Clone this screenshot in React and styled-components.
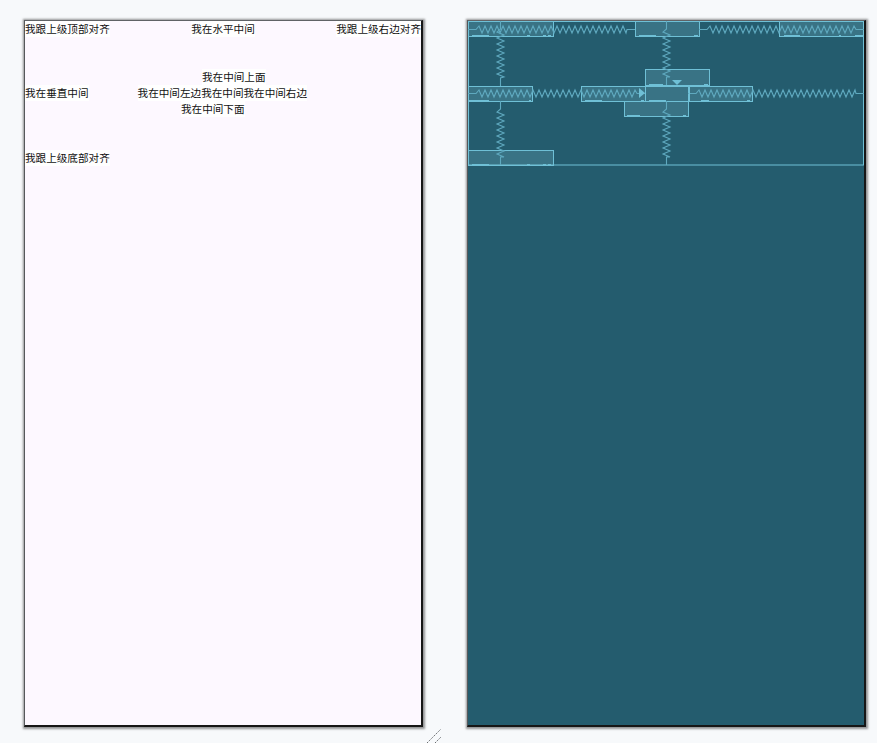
import React from "react"
import styled, { createGlobalStyle } from "styled-components"

const GlobalStyle = createGlobalStyle`
  html, body {
    margin: 0;
    padding: 0;
    background: #f7f9fb;
  }
  #root {
    width: 877px;
    height: 743px;
    overflow: hidden;
  }
`

const Page = styled.div`
  position: relative;
  width: 877px;
  height: 743px;
  display: flex;
  gap: 44px;
  padding: 20px 0 0 24px;
  box-sizing: border-box;
`

const Frame = styled.div`
  width: 399px;
  height: 707px;
  flex: none;
  background: ${props => props.$bg};
  border-top: 1px solid #606366;
  border-left: 1px solid #55585a;
  border-right: 2px solid #161616;
  border-bottom: 2px solid #161616;
  box-shadow: 0 0 2px 1.5px rgba(80, 80, 80, 0.6);
  box-sizing: border-box;
  overflow: hidden;
`

const Row = styled.div`
  display: flex;
  justify-content: ${props => props.$justify || "flex-start"};
  height: 16px;
  margin-top: ${props => props.$top || 0}px;
  padding-left: ${props => props.$indent || 0}px;
`

const Label = styled.span`
  font-family: "Noto Sans CJK SC", "Liberation Sans", sans-serif;
  font-size: 10.6px;
  line-height: 16px;
  color: #111;
  white-space: nowrap;
  background: #fff;
`

const Blueprint = styled.svg`
  display: block;
`

const Grip = styled.svg`
  position: absolute;
  left: 427px;
  top: 729px;
`

const line = "#6fc0d6"

const boxes = [
  { x: 468, y: 21, w: 85, h: 15, marks: [[472, 489], [527, 530], [543, 546], [548, 551]] },
  { x: 635, y: 21, w: 64, h: 15, marks: [[639, 656], [694, 698]] },
  { x: 779, y: 21, w: 85, h: 15, marks: [[784, 800], [839, 841], [855, 863]] },
  { x: 645, y: 69, w: 64, h: 16, marks: [[649, 663], [704, 708]] },
  { x: 468, y: 86, w: 64, h: 15, marks: [[469, 489], [529, 531]] },
  { x: 581, y: 86, w: 64, h: 15, marks: [[585, 602], [641, 644]] },
  { x: 645, y: 86, w: 43, h: 15, marks: [[649, 666]] },
  { x: 688, y: 86, w: 64, h: 15, marks: [[701, 709], [747, 750]] },
  { x: 624, y: 101, w: 64, h: 15, marks: [[627, 640], [683, 686]] },
  { x: 468, y: 150, w: 85, h: 15, marks: [[472, 489], [527, 530], [543, 546], [548, 551]] },
]

// zigzag between two points, straight leads at each end
const spring = (x1, y1, x2, y2, lead = 8, pitch = 6) => {
  const horizontal = y1 === y2
  const len = horizontal ? x2 - x1 : y2 - y1
  const count = Math.floor((len - lead * 2) / (pitch / 2))
  const at = (along, side) =>
    horizontal ? `${x1 + along} ${y1 + side}` : `${x1 + side} ${y1 + along}`
  let d = `M${at(0, 0)} L${at(lead, 0)}`
  for (let i = 1; i <= count; i++) {
    d += ` L${at(lead + (i * pitch) / 2, i % 2 ? -3.5 : 3.5)}`
  }
  d += ` L${at(len - lead, 0)} L${at(len, 0)}`
  return d
}

const springs = [
  [468, 29.5, 635, 29.5],
  [699, 29.5, 864, 29.5],
  [468, 93.5, 645, 93.5],
  [688, 93.5, 864, 93.5],
  [500.5, 21, 500.5, 86],
  [500.5, 101, 500.5, 165],
  [666.5, 21, 666.5, 85],
  [666.5, 101, 666.5, 165],
]

const Plan = () => (
  <Blueprint width="396" height="704" viewBox="468 21 396 704">
    <rect x="468.5" y="21.5" width="395" height="143.5" fill="none" stroke={line} />
    {boxes.map(b => (
      <g key={`${b.x}-${b.y}`}>
        <rect x={b.x + 0.5} y={b.y + 0.5} width={b.w} height={b.h} fill="#93dcec" fillOpacity="0.19" stroke={line} />
        {b.marks.map(([from, to]) => (
          <rect key={from} x={from} y={b.y + b.h - 1} width={to - from} height="2" fill={line} />
        ))}
      </g>
    ))}
    {springs.map(s => (
      <path key={s.join()} d={spring(...s)} stroke="#5fa9bf" strokeWidth="1.1" fill="none" />
    ))}
    <path d="M639 88L645 93L639 98Z" fill={line} />
    <path d="M672 80H682L677 85Z" fill={line} />
    <path d="M689.5 86V101" stroke={line} fill="none" />
  </Blueprint>
)

export default function App() {
  return (
    <Page>
      <GlobalStyle />
      <Frame $bg="#fdf8ff">
        <Row $justify="space-between">
          <Label>我跟上级顶部对齐</Label>
          <Label>我在水平中间</Label>
          <Label>我跟上级右边对齐</Label>
        </Row>
        <Row $top={32} $indent={177}>
          <Label>我在中间上面</Label>
        </Row>
        <Row>
          <Label>我在垂直中间</Label>
          <Row $indent={49}>
            <Label>我在中间左边</Label>
            <Label>我在中间</Label>
            <Label>我在中间右边</Label>
          </Row>
        </Row>
        <Row $indent={156}>
          <Label>我在中间下面</Label>
        </Row>
        <Row $top={33}>
          <Label>我跟上级底部对齐</Label>
        </Row>
      </Frame>
      <Frame $bg="#245c6e">
        <Plan />
      </Frame>
      <Grip width="15" height="14" viewBox="0 0 15 14">
        <path d="M0 14L14 0M8 14L14 8" stroke="#6a6d70" strokeDasharray="1.5 1" fill="none" />
      </Grip>
    </Page>
  )
}
